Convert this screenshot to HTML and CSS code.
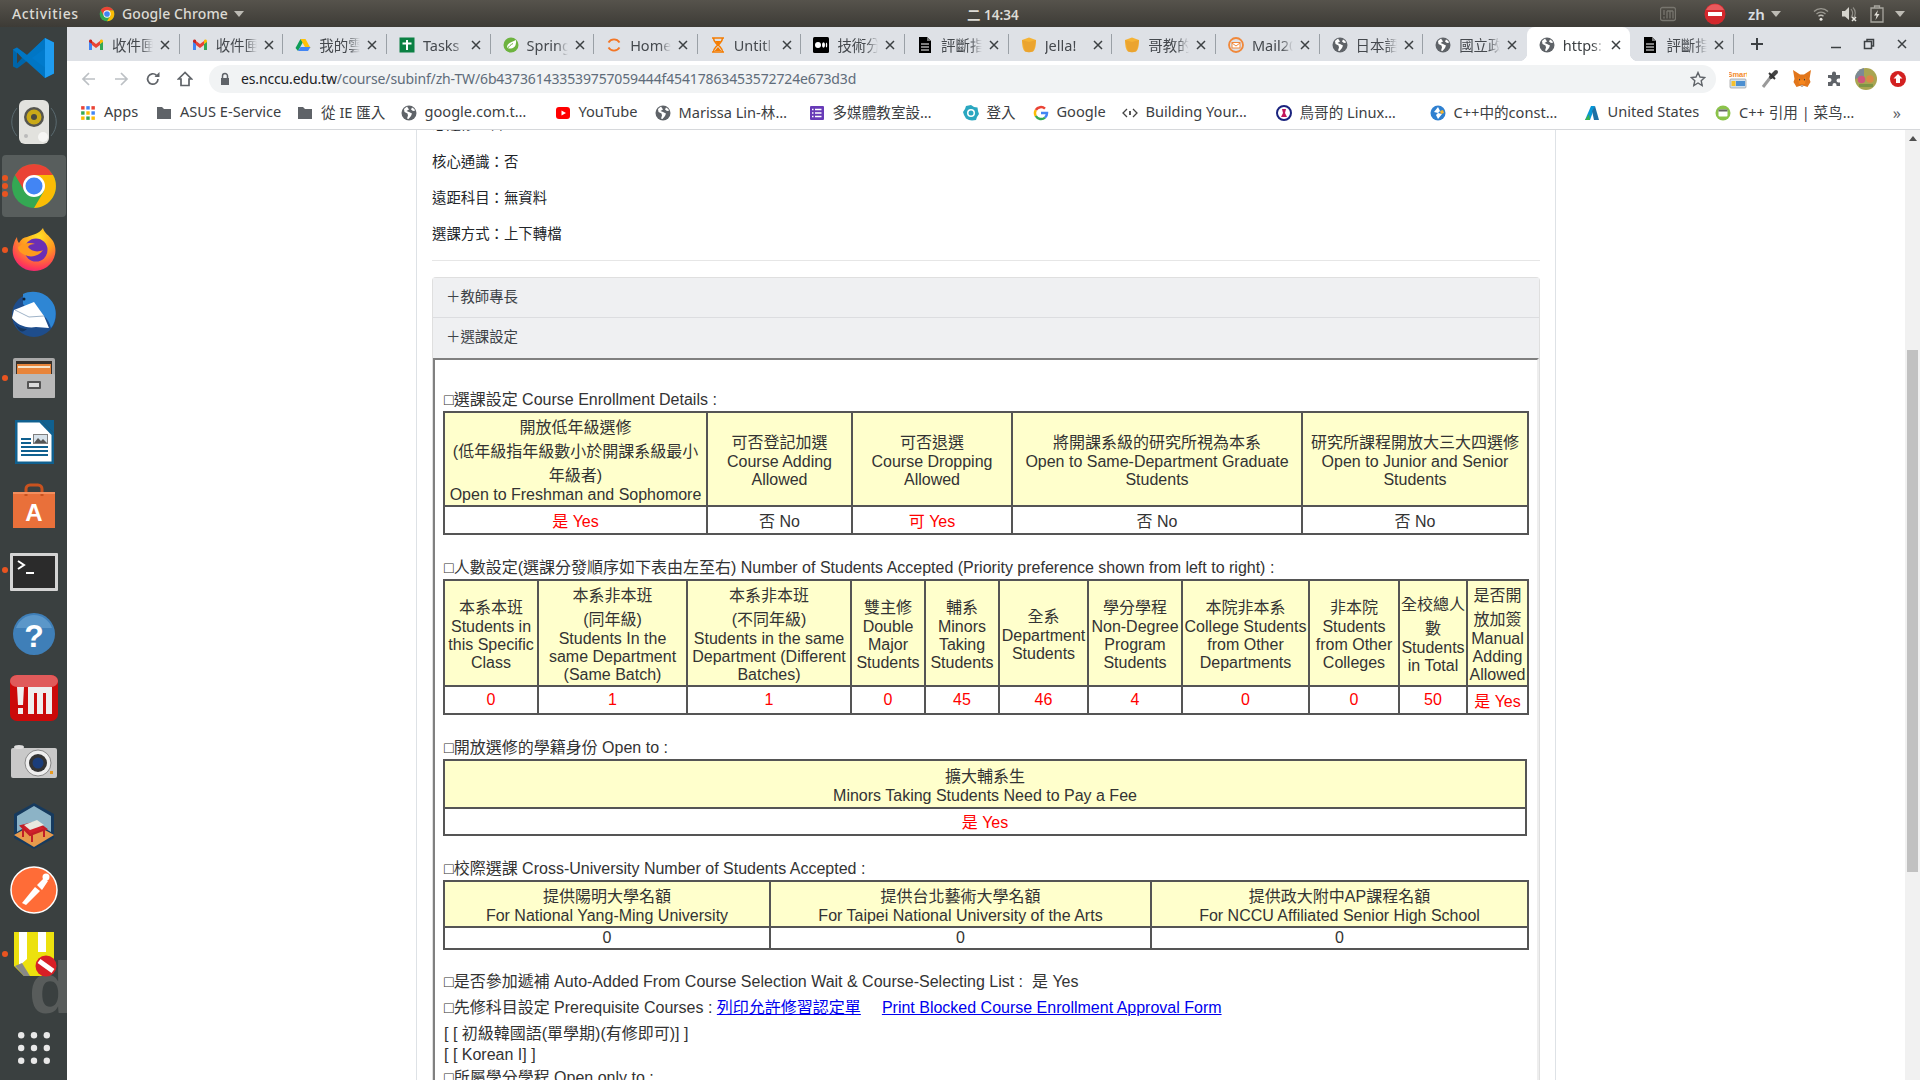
FILE: index.html
```html
<!DOCTYPE html>
<html lang="zh-TW">
<head>
<meta charset="utf-8">
<title>課程資訊</title>
<link rel="stylesheet" href="styles.css">
</head>
<body>
<svg class="defs" aria-hidden="true">
  <symbol id="i-gmail" viewBox="0 0 16 16"><path fill="#4285f4" d="M1 4v9h3V7z"/><path fill="#34a853" d="M15 4v9h-3V7z"/><path fill="#ea4335" d="M4 4v4l4 3 4-3V4L8 7z"/><path fill="#c5221f" d="M1 4c0-1.5 1.7-2 3-1v4L1 5z"/><path fill="#fbbc04" d="M15 4c0-1.500-1.700-2-3-1v4l3-2z"/></symbol>
  <symbol id="i-drive" viewBox="0 0 16 16"><path fill="#0f9d58" d="M5.500 2 0.500 11l2.500 3 5-9z"/><path fill="#ffc107" d="M5.500 2h5l5 9h-5z"/><path fill="#4285f4" d="M3 14l2.500-4H15.500L13 14z"/></symbol>
  <symbol id="i-tasks" viewBox="0 0 16 16"><rect x="0.500" y="0.500" width="15" height="15" fill="#0b8043"/><path stroke="#fff" stroke-width="2" d="M8 3v10M3.500 6.500h9"/></symbol>
  <symbol id="i-spring" viewBox="0 0 16 16"><circle cx="8" cy="8" r="7.500" fill="#6db33f"/><path fill="#fff" d="M13 3c.5 4-1 8-5 8.500-2 .2-3.500-.3-4-1C4 7 7 5.500 13 3z"/><path stroke="#6db33f" fill="none" d="M4 12c2-3 4-4.500 6-5.500"/></symbol>
  <symbol id="i-home" viewBox="0 0 16 16"><path fill="none" stroke="#f37626" stroke-width="1.800" d="M2.500 5.500a6.500 6.500 0 0 1 11 0M2.500 10.500a6.500 6.500 0 0 0 11 0"/></symbol>
  <symbol id="i-hour" viewBox="0 0 16 16"><path fill="none" stroke="#f57c00" stroke-width="1.500" d="M2 1h12M2 15h12M3.500 1c0 4 3 5 4 7-1 2-4 3-4 7M12.500 1c0 4-3 5-4 7 1 2 4 3 4 7"/><path fill="#f57c00" d="M5 4h6L8 8zM4.500 14 8 10l3.500 4z"/></symbol>
  <symbol id="i-medium" viewBox="0 0 16 16"><rect width="16" height="16" rx="1.500"/><circle cx="5" cy="8" r="3" fill="#fff"/><ellipse cx="10.500" cy="8" rx="1.500" ry="2.800" fill="#fff"/><ellipse cx="13.500" cy="8" rx=".7" ry="2.500" fill="#fff"/></symbol>
  <symbol id="i-doc" viewBox="0 0 16 16"><path d="M2 0h8l4 4v12H2z"/><path stroke="#fff" d="M4 7h8M4 10h8M4 13h8"/><path fill="#777" d="M10 0v4h4z"/></symbol>
  <symbol id="i-jelly" viewBox="0 0 16 16"><path fill="#f5b335" d="M8 0.500 15 3c0 6-1 10-3 11.500-2.500 1-5.500 1-8 0C2 13 1 9 1 3z"/><path fill="#e2962a" d="M1 3l7 2 7-2-1 6-2 5.500c-2.500 1-5.500 1-8 0z" opacity=".5"/></symbol>
  <symbol id="i-mail" viewBox="0 0 16 16"><circle cx="8" cy="8" r="7" fill="none" stroke="#f0883a" stroke-width="1.800"/><rect x="4" y="5.500" width="8" height="5.500" fill="#fff" stroke="#f0883a"/><path fill="none" stroke="#f0883a" d="M4 6l4 3 4-3"/></symbol>
  <symbol id="i-globe" viewBox="0 0 16 16"><circle cx="8" cy="8" r="7.500" fill="#5f6368"/><path fill="#fff" d="M6 1.500 3 4l.5 3 3 1.500.5 2-1 3 1.500.5 2.500-3 1-2.500-3-1.500L5.500 6 8 4.500zM11 2.500l-1 2 2 1.500 2.300-.5A7 7 0 0 0 11 2.500z"/></symbol>
  <symbol id="i-folder" viewBox="0 0 16 16"><path fill="#5f6368" d="M1 2h5l2 2h7v10H1z"/></symbol>
  <symbol id="i-chrome" viewBox="0 0 48 48"><circle cx="24" cy="24" r="22" fill="#34a853"/><path fill="#fbbc05" d="M43 13A22 22 0 0 1 24 46L34 29 24 13z"/><path fill="#ea4335" d="M24 2A22 22 0 0 1 43 13H24L14.500 29 5 13A22 22 0 0 1 24 2z"/><circle cx="24" cy="24" r="11" fill="#fff"/><circle cx="24" cy="24" r="8.500" fill="#4285f4"/></symbol>
</svg>

<div class="screen">
  <header class="topbar">
    <div class="top-left">
      <span class="activities">Activities</span>
      <svg class="top-chrome"><use href="#i-chrome"/></svg>
      <span class="appname">Google Chrome</span>
      <i class="caret"></i>
    </div>
    <div class="clock">二 14:34</div>
    <div class="tray">
      <svg class="tray-m" viewBox="0 0 16 16"><rect x=".5" y="1.500" width="15" height="13" rx="2" fill="none" stroke="#77756e" stroke-width="1.300"/><path stroke="#77756e" stroke-width="1.300" d="M4 4v5M4 10.500v2M7 5v7.500M10 5v7.500M13 5v7.500M7 5h6"/></svg>
      <svg class="tray-stop" viewBox="0 0 22 22"><circle cx="11" cy="11" r="10.500" fill="#d3272c"/><path d="M2 7a10 10 0 0 1 18 0z" fill="#e85a5d"/><rect x="4" y="9" width="14" height="4" fill="#fff"/></svg>
      <span class="tray-zh">zh</span>
      <i class="caret tray-caret1"></i>
      <svg class="tray-wifi" viewBox="0 0 16 14"><path fill="none" stroke="#9a9890" stroke-width="1.300" d="M1 4.500a10 10 0 0 1 14 0M3.500 7a6.500 6.500 0 0 1 9 0"/><path fill="none" stroke="#bdbbb4" stroke-width="1.300" d="M5.500 9.300a3.500 3.500 0 0 1 5 0"/><circle cx="8" cy="12.300" r="1.500" fill="#e6e4de"/></svg>
      <svg class="tray-vol" viewBox="0 0 16 16"><path fill="#d6d4cd" d="M1 5h3l4-4v13L4 10.500H1z"/><path fill="none" stroke="#8f8d86" stroke-width="1.200" d="M10 3c2 2.500 2 6 0 8.500M12 1.500c3 3 3 8 0 11"/><path stroke="#e6e4de" stroke-width="1.500" d="M11 11l4 4M15 11l-4 4"/></svg>
      <svg class="tray-batt" viewBox="0 0 14 18"><path fill="none" stroke="#a8a69f" stroke-width="1.300" d="M1 3h12v14H1zM4.500 3V1h5v2"/><path fill="#dedcd5" d="M8 5 4 10.500h2.500L5.500 15l4-6H7z"/></svg>
      <i class="caret tray-caret2"></i>
    </div>
  </header>

  <nav class="dock">
    <a class="dock-item"><svg class="dock-ico" viewBox="0 0 48 48"><path fill="#0065a9" d="M44 8.500 35 4 17 21 7 13.500 3 15.500V32.500L7 34.500 17 27 35 44 44 39.500z"/><path fill="#007acc" d="M35 4 17 21 7 13.500 3 15.500 35 44z" opacity=".8"/><path fill="#1f9cf0" d="M35 4 44 8.500V39.500L35 44z"/><path fill="#007acc" d="M35 14.500 22 24 35 33.500z"/><path fill="#3a4040" d="M7 18.500 12 24 7 29.500z"/></svg></a>
    <a class="dock-item"><svg class="dock-ico" viewBox="0 0 48 48"><g fill="none" stroke="#5a6a70" stroke-width="1"><path d="M7 10C0 18 0 30 7 38M41 10c7 8 7 20 0 28"/></g><rect x="9" y="2" width="30" height="44" rx="6" fill="#e2e2de"/><circle cx="24" cy="19" r="10" fill="#55554f"/><circle cx="24" cy="19" r="7.500" fill="#c9a918"/><circle cx="24" cy="19" r="3" fill="#4a4a42"/><circle cx="33" cy="39" r="5" fill="#f6f6f4"/><circle cx="16" cy="38" r="2" fill="#bbb"/></svg></a>
    <a class="dock-item is-active"><i class="run r1"></i><i class="run r2"></i><i class="run r3"></i><svg class="dock-ico"><use href="#i-chrome"/></svg></a>
    <a class="dock-item"><i class="run r2"></i><svg class="dock-ico" viewBox="0 0 48 48"><defs><radialGradient id="ff" cx=".6" cy=".2" r=".9"><stop offset="0" stop-color="#ffe226"/><stop offset=".45" stop-color="#ff9a1f"/><stop offset=".8" stop-color="#ff3d55"/><stop offset="1" stop-color="#e31587"/></radialGradient></defs><path fill="url(#ff)" d="M33 2c1 5 6 7 10 13 5 9 2 20-6 26-9 6-21 5-28-2C3 33 1 25 4 17c.5-2 1.500-4 3-6 0 3 1 5 2 6 2-4 5-6 8-6 5-2 12-3 16-9z"/><circle cx="26" cy="24" r="11.500" fill="#6b2fb5"/><path fill="#ff9a1f" d="M8 21c5-4 12-5 17-3-4 0-6 1-7 3 3 4 9 6 15 3-4 6-12 8-18 5-4-2-7-4-7-8z"/></svg></a>
    <a class="dock-item"><svg class="dock-ico" viewBox="0 0 48 48"><circle cx="24" cy="25" r="22" fill="#1e4d8c"/><path fill="#2e86d4" d="M13 4c10-5 25-2 31 11 3 7 2 17-3 23-2-9-10-17-19-19-4-1-7-2-9-5z"/><path fill="#fff" d="M4 20 24 12l10 14 5 12-13-1c-10 2-20-3-24-9z"/><path fill="none" stroke="#9fb3c8" d="M5 20l14 7 15-1"/><circle cx="14" cy="9" r="1.500" fill="#123"/><path fill="#16365f" d="M5 34c4 4 8 5 12 5-3 3-6 3-8 1z"/></svg></a>
    <a class="dock-item"><i class="run r2"></i><svg class="dock-ico" viewBox="0 0 48 48"><rect x="3" y="4" width="42" height="40" rx="2" fill="#a9a9a9"/><rect x="6" y="7" width="36" height="13" fill="#37302a"/><rect x="7" y="10" width="34" height="10" fill="#e8853b"/><rect x="8" y="12" width="32" height="2" fill="#f7e3c9"/><rect x="3" y="20" width="42" height="24" rx="1" fill="#b9b9b9"/><rect x="17" y="27" width="14" height="8" rx="1" fill="#555"/><rect x="19" y="29" width="10" height="4" fill="#ddd"/></svg></a>
    <a class="dock-item"><svg class="dock-ico" viewBox="0 0 48 48"><path fill="#10608f" d="M5 2h26l13 13v31H5z"/><path fill="#fff" d="M7.500 4.500h22L41.500 17v26.500h-34z"/><path fill="#10608f" d="M31 2h13v13z"/><path fill="#10608f" d="M11 20h10v2H11zM11 24h10v2H11zM11 28h27v2H11zM11 32h27v2H11zM11 36h27v2H11z"/><rect x="23" y="16" width="15" height="10" fill="#7f7f7f"/><path fill="#d7e2ea" d="M24 17h13v8H24z"/><path fill="#555" d="M24 25l4-5 3 3 2-2 4 4z"/></svg></a>
    <a class="dock-item"><svg class="dock-ico" viewBox="0 0 48 48"><rect x="3" y="10" width="42" height="36" fill="#e9703a"/><path fill="none" stroke="#c8521f" stroke-width="3" d="M16 14V7a4 4 0 0 1 4-4h8a4 4 0 0 1 4 4v7"/><rect x="3" y="10" width="42" height="2" fill="#f28e5e"/><text class="bag-a" x="24" y="39" text-anchor="middle">A</text></svg></a>
    <a class="dock-item dock-term"><i class="run r2"></i><svg class="dock-ico" viewBox="0 0 48 48"><rect x="0" y="5" width="48" height="38" rx="1" fill="#d4d4d4"/><rect x="3" y="8" width="42" height="32" fill="#2b2b2b"/><path fill="none" stroke="#fff" stroke-width="2" d="M8 13l6 4-6 4"/><path stroke="#fff" stroke-width="2" d="M16 25h8"/></svg></a>
    <a class="dock-item"><svg class="dock-ico" viewBox="0 0 48 48"><circle cx="24" cy="24" r="21" fill="#3f7fb8"/><path d="M6 18a19 19 0 0 1 36 0z" fill="#5b97c9"/><text class="help-q" x="24" y="37" text-anchor="middle">?</text></svg></a>
    <a class="dock-item"><svg class="dock-ico" viewBox="0 0 48 48"><rect x="0" y="1" width="48" height="46" rx="7" fill="#cb0a0a"/><rect x="0" y="1" width="48" height="12" rx="7" fill="#e05a5a"/><path fill="#eee" d="M7 13h7l-1 18H8zM8 34h5v6H8zM18 13h24v27h-6V19h-3v21h-6V19h-3v21h-6z"/></svg></a>
    <a class="dock-item"><svg class="dock-ico" viewBox="0 0 48 48"><rect x="1" y="10" width="46" height="30" rx="2" fill="#c9c9c9"/><ellipse cx="9" cy="9" rx="5" ry="2" fill="#ddd"/><circle cx="28" cy="25" r="13" fill="#eee" stroke="#888"/><circle cx="28" cy="25" r="9" fill="#333"/><circle cx="28" cy="25" r="5.500" fill="#1b3d7a"/><rect x="40" y="33" width="3" height="3" fill="#e99b20"/></svg></a>
    <a class="dock-item"><svg class="dock-ico" viewBox="0 0 48 48"><path fill="#163a5e" d="M24 1 44 12V36L24 47 4 36V12z"/><path fill="#8cb3c6" d="M7 14 24 4 41 14V30L24 20 7 30z"/><path fill="#e79a4c" d="M4 33 24 22 44 33 24 45z"/><path fill="#d0202b" d="M11 24 27 20 36 27 20 33zM13 27v8M22 32v8M34 28v7" stroke="#c01d27" stroke-width="2"/><path fill="#e8e8e0" d="M14 23l13-5 7 5-14 5z"/></svg></a>
    <a class="dock-item"><svg class="dock-ico" viewBox="0 0 48 48"><circle cx="24" cy="24" r="23" fill="#ff6c37" stroke="#fff" stroke-width="1.500"/><path fill="#fff" d="M12 37 25 21l5 4-14 14zM27 19l7-7 4 3-6 9z"/><circle cx="36" cy="11" r="3.500" fill="#fff"/></svg></a>
    <a class="dock-item"><i class="run r2"></i><svg class="dock-ico" viewBox="0 0 48 48"><path fill="#ece10e" d="M4 2h40v30l-10 14H14L4 36z"/><path fill="#fff" d="M9 2h8v27l-8 7zM28 2h8v20h-8z"/><path fill="#888" d="M5 36l9 10h6l-8-13z"/><circle cx="36" cy="36" r="10.500" fill="#d81f26"/><path stroke="#fff" stroke-width="5" d="M29 31l14 10"/></svg></a>
    <a class="dock-item dock-apps"><svg class="apps-dots" viewBox="0 0 30 30"><g fill="#e8e8e8"><circle cx="3" cy="3" r="3"/><circle cx="15" cy="3" r="3"/><circle cx="27" cy="3" r="3"/><circle cx="3" cy="15" r="3"/><circle cx="15" cy="15" r="3"/><circle cx="27" cy="15" r="3"/><circle cx="3" cy="27" r="3"/><circle cx="15" cy="27" r="3"/><circle cx="27" cy="27" r="3"/></g></svg></a>
    <span class="dock-wall">d</span>
  </nav>

  <div class="browser">
    <div class="tabstrip">
      <div class="tab"><svg class="fav"><use href="#i-gmail"/></svg><span class="title">收件匣</span><svg class="x" viewBox="0 0 10 10"><path d="M1 1l8 8M9 1l-8 8"/></svg></div>
      <div class="tab"><svg class="fav"><use href="#i-gmail"/></svg><span class="title">收件匣</span><svg class="x" viewBox="0 0 10 10"><path d="M1 1l8 8M9 1l-8 8"/></svg></div>
      <div class="tab"><svg class="fav"><use href="#i-drive"/></svg><span class="title">我的雲</span><svg class="x" viewBox="0 0 10 10"><path d="M1 1l8 8M9 1l-8 8"/></svg></div>
      <div class="tab"><svg class="fav"><use href="#i-tasks"/></svg><span class="title">Tasks</span><svg class="x" viewBox="0 0 10 10"><path d="M1 1l8 8M9 1l-8 8"/></svg></div>
      <div class="tab"><svg class="fav"><use href="#i-spring"/></svg><span class="title">Spring</span><svg class="x" viewBox="0 0 10 10"><path d="M1 1l8 8M9 1l-8 8"/></svg></div>
      <div class="tab"><svg class="fav"><use href="#i-home"/></svg><span class="title">Home</span><svg class="x" viewBox="0 0 10 10"><path d="M1 1l8 8M9 1l-8 8"/></svg></div>
      <div class="tab"><svg class="fav"><use href="#i-hour"/></svg><span class="title">Untitl</span><svg class="x" viewBox="0 0 10 10"><path d="M1 1l8 8M9 1l-8 8"/></svg></div>
      <div class="tab"><svg class="fav"><use href="#i-medium"/></svg><span class="title">技術分</span><svg class="x" viewBox="0 0 10 10"><path d="M1 1l8 8M9 1l-8 8"/></svg></div>
      <div class="tab"><svg class="fav"><use href="#i-doc"/></svg><span class="title">評斷指</span><svg class="x" viewBox="0 0 10 10"><path d="M1 1l8 8M9 1l-8 8"/></svg></div>
      <div class="tab"><svg class="fav"><use href="#i-jelly"/></svg><span class="title">Jella!</span><svg class="x" viewBox="0 0 10 10"><path d="M1 1l8 8M9 1l-8 8"/></svg></div>
      <div class="tab"><svg class="fav"><use href="#i-jelly"/></svg><span class="title">哥教的</span><svg class="x" viewBox="0 0 10 10"><path d="M1 1l8 8M9 1l-8 8"/></svg></div>
      <div class="tab"><svg class="fav"><use href="#i-mail"/></svg><span class="title">Mail20</span><svg class="x" viewBox="0 0 10 10"><path d="M1 1l8 8M9 1l-8 8"/></svg></div>
      <div class="tab"><svg class="fav"><use href="#i-globe"/></svg><span class="title">日本語</span><svg class="x" viewBox="0 0 10 10"><path d="M1 1l8 8M9 1l-8 8"/></svg></div>
      <div class="tab tab-before"><svg class="fav"><use href="#i-globe"/></svg><span class="title">國立政</span><svg class="x" viewBox="0 0 10 10"><path d="M1 1l8 8M9 1l-8 8"/></svg></div>
      <div class="tab tab-active"><svg class="fav"><use href="#i-globe"/></svg><span class="title">https:</span><svg class="x" viewBox="0 0 10 10"><path d="M1 1l8 8M9 1l-8 8"/></svg></div>
      <div class="tab"><svg class="fav"><use href="#i-doc"/></svg><span class="title">評斷指</span><svg class="x" viewBox="0 0 10 10"><path d="M1 1l8 8M9 1l-8 8"/></svg></div>
      <svg class="newtab" viewBox="0 0 14 14"><path d="M7 1v12M1 7h12"/></svg>
      <div class="winctl">
        <svg class="win-min" viewBox="0 0 12 12"><path d="M1 9.500h10"/></svg>
        <svg class="win-max" viewBox="0 0 12 12"><path d="M1.500 3.500h7v7h-7zM4 3.500V1.500h6.500v6.500H8.500"/></svg>
        <svg class="win-close" viewBox="0 0 12 12"><path d="M2 2l8 8M10 2l-8 8"/></svg>
      </div>
    </div>

    <div class="toolbar">
      <svg class="nav nav-off" viewBox="0 0 16 16"><path d="M14 8H2.500M8 2 2 8l6 6"/></svg>
      <svg class="nav nav-off" viewBox="0 0 16 16"><path d="M2 8h11.500M8 2l6 6-6 6"/></svg>
      <svg class="nav" viewBox="0 0 16 16"><path d="M13 8a5.200 5.200 0 1 1-1.500-3.700"/><path class="solid" d="M9.500 6h5V1z"/></svg>
      <svg class="nav" viewBox="0 0 16 16"><path d="M8 1.500 1.500 8H4v6.500h8V8h2.500z"/></svg>
      <div class="omnibox">
        <svg class="lock" viewBox="0 0 16 16"><path fill="#5f6368" d="M4 7h8v7H4z"/><path fill="none" stroke="#5f6368" stroke-width="1.500" d="M5.500 7V5a2.500 2.500 0 0 1 5 0v2"/></svg>
        <span class="url"><b>es.nccu.edu.tw</b>/course/subinf/zh-TW/6b437361433539757059444f45417863453572724e673d3d</span>
        <svg class="star" viewBox="0 0 16 16"><path d="M8 1.500 10 6l4.700.5-3.500 3.200 1 4.800L8 12l-4.200 2.500 1-4.800L1.300 6.500 6 6z"/></svg>
      </div>
      <div class="exts">
        <span class="ext"><svg viewBox="0 0 18 20" class="ext-ico"><rect x="1" y="10" width="16" height="9" rx="1" fill="#cfe0ee" stroke="#999" stroke-width=".7"/><rect x="2.500" y="12" width="4" height="5" fill="#f5c02c"/><rect x="7" y="12" width="9" height="5" fill="#4c8fd1"/><text class="smart" x="9" y="7.500" text-anchor="middle">Smart</text></svg></span>
        <span class="ext"><svg viewBox="0 0 18 20" class="ext-ico"><path stroke="#9a9a9a" stroke-width="3" d="M2 18 9 9"/><path stroke="#444" stroke-width="4" stroke-linecap="round" d="M10 8l5-5"/><path stroke="#333" stroke-width="2" d="M8 4l6 6"/></svg></span>
        <span class="ext"><svg viewBox="0 0 18 18" class="ext-ico"><path fill="#e2761b" d="M0 0l7 4.500h4L18 0l-1.500 9 1 3-3 5-3-1H6.500l-3 1-3-5 1-3z"/><path fill="#f6851b" d="M5 7l4 3 4-3-1 7H6z"/><path fill="#233447" d="M6 8.500 7.500 10 6 10.500zM12 8.500 10.500 10l1.500.5z"/><path fill="#c0ad9e" d="M7.500 15h3l-.5 2H8z"/></svg></span>
        <span class="ext"><svg viewBox="0 0 16 16" class="ext-ico ext-puzzle"><path fill="#5f6368" d="M6 2.500a2 2 0 0 1 4 0V4h4v3.500h-1.500a2 2 0 0 0 0 4H14V15H10.500v-1a2 2 0 0 0-4 0v1H2v-4H3.500a2 2 0 0 0 0-4H2V4h4z"/></svg></span>
        <span class="ext"><svg viewBox="0 0 22 22" class="ext-avatar"><circle cx="11" cy="11" r="11" fill="#a9a551"/><path fill="#7c8a96" d="M0 11a11 11 0 0 1 9-11v8z"/><circle cx="6.500" cy="11.500" r="3.800" fill="#d0567c"/><circle cx="15" cy="11" r="3.800" fill="#d98a47"/><rect x="4" y="16" width="14" height="3" fill="#7d9445"/></svg></span>
        <span class="ext"><svg viewBox="0 0 16 16" class="ext-ico ext-up"><circle cx="8" cy="8" r="8" fill="#d32121"/><path fill="#fff" d="M8 3l4.500 4.500H10V12H6V7.500H3.500z"/></svg></span>
      </div>
    </div>

    <div class="bookmarks">
      <div class="bm w76"><svg class="bm-ico" viewBox="0 0 14 14"><rect x="1" y="1" width="3" height="3" fill="#ea4335"/><rect x="5.500" y="1" width="3" height="3" fill="#4285f4"/><rect x="10" y="1" width="3" height="3" fill="#ea4335"/><rect x="1" y="5.500" width="3" height="3" fill="#34a853"/><rect x="5.500" y="5.500" width="3" height="3" fill="#fbbc04"/><rect x="10" y="5.500" width="3" height="3" fill="#4285f4"/><rect x="1" y="10" width="3" height="3" fill="#fbbc04"/><rect x="5.500" y="10" width="3" height="3" fill="#34a853"/><rect x="10" y="10" width="3" height="3" fill="#fbbc04"/></svg><span class="bm-t">Apps</span></div>
      <div class="bm w141"><svg class="bm-ico"><use href="#i-folder"/></svg><span class="bm-t">ASUS E-Service</span></div>
      <div class="bm w103"><svg class="bm-ico"><use href="#i-folder"/></svg><span class="bm-t">從 IE 匯入</span></div>
      <div class="bm w154"><svg class="bm-ico"><use href="#i-globe"/></svg><span class="bm-t">google.com.t…</span></div>
      <div class="bm w100"><svg class="bm-ico" viewBox="0 0 16 16"><rect x="1" y="2" width="14" height="12" rx="3" fill="#f00"/><path fill="#fff" d="M6.500 5.500 11 8l-4.500 2.500z"/></svg><span class="bm-t">YouTube</span></div>
      <div class="bm w154"><svg class="bm-ico"><use href="#i-globe"/></svg><span class="bm-t">Marissa Lin-林…</span></div>
      <div class="bm w154"><svg class="bm-ico" viewBox="0 0 16 16"><rect x="1" y="1" width="14" height="14" rx="1" fill="#673ab7"/><path stroke="#fff" stroke-width="1.500" d="M6 4.500h6.500M6 8h6.500M6 11.500h6.500M3 4.500h1.500M3 8h1.500M3 11.500h1.500"/></svg><span class="bm-t">多媒體教室設…</span></div>
      <div class="bm w70"><svg class="bm-ico" viewBox="0 0 16 16"><path fill="#2aa7c0" d="M8 0l3 2 3.500.5L15 6l1 3-2 3-1 3-4 .5-3-.5-3-1.500L1 10 0 7l2-3 1-3z"/><circle cx="8" cy="8" r="4" fill="#fff"/><circle cx="8" cy="8" r="2.500" fill="#2aa7c0"/></svg><span class="bm-t">登入</span></div>
      <div class="bm w89"><svg class="bm-ico" viewBox="0 0 16 16"><path fill="none" stroke="#ea4335" stroke-width="2.500" d="M2.800 5A6 6 0 0 1 12 3.700"/><path fill="none" stroke="#fbbc04" stroke-width="2.500" d="M2.800 5a6 6 0 0 0 0 6"/><path fill="none" stroke="#34a853" stroke-width="2.500" d="M2.800 11A6 6 0 0 0 12 12.600"/><path fill="none" stroke="#4285f4" stroke-width="2.500" d="M12 12.600A6 6 0 0 0 14 8H8"/></svg><span class="bm-t">Google</span></div>
      <div class="bm w154"><svg class="bm-ico" viewBox="0 0 16 16"><path fill="none" stroke="#444" stroke-width="1.300" d="M5 4 1 8l4 4M11 4l4 4-4 4"/><path stroke="#444" stroke-width="1.800" d="M8 6v4"/></svg><span class="bm-t">Building Your…</span></div>
      <div class="bm w154"><svg class="bm-ico" viewBox="0 0 16 16"><circle cx="8" cy="8" r="7" fill="#fff" stroke="#1a237e" stroke-width="2"/><path fill="#c2185b" d="M6 4h4l-1 4 2 4H5l2-4z"/></svg><span class="bm-t">鳥哥的 Linux…</span></div>
      <div class="bm w154"><svg class="bm-ico" viewBox="0 0 16 16"><circle cx="8" cy="8" r="7.500" fill="#2f80d0"/><path fill="#fff" d="M8 2l2 4-2 2-4-1zM8 14l-2-4 2-2 4 1z"/><path fill="#f7b731" d="M10 6l3-1 1 3-3 1z"/></svg><span class="bm-t">C++中的const…</span></div>
      <div class="bm w131"><svg class="bm-ico" viewBox="0 0 16 16"><path fill="#0696d7" d="M7 1h4L6 15H1z"/><path fill="#37b24d" d="M1 15l4-6 1 6z"/><path fill="#1d6fa5" d="M11 1l4 14h-5L8 6z"/></svg><span class="bm-t">United States</span></div>
      <div class="bm w150"><svg class="bm-ico" viewBox="0 0 16 16"><circle cx="8" cy="8" r="7.500" fill="#8bc34a"/><rect x="3.500" y="4.500" width="9" height="7" rx="1" fill="#fff"/><rect x="3.500" y="4.500" width="9" height="2" fill="#666"/></svg><span class="bm-t">C++ 引用 | 菜鸟…</span></div>
      <span class="bm-more">»</span>
    </div>

    <div class="viewport">
      <div class="page">
        <main class="column">
          <p class="info info-cut">必選修：否</p>
          <p class="info">核心通識：否</p>
          <p class="info">遠距科目：無資料</p>
          <p class="info">選課方式：上下轉檔</p>
          <hr class="rule">
          <section class="panel">
            <h3 class="panel-head">＋教師專長</h3>
            <h3 class="panel-head panel-head-open">＋選課設定</h3>
            <div class="panel-body">
              <div class="sec-title sec-first">□選課設定 Course Enrollment Details :</div>
              <table class="grid">
                <colgroup><col class="c263"><col class="c145"><col class="c160"><col class="c290"><col class="c226"></colgroup>
                <tr class="h94">
                  <th>開放低年級選修<br>(低年級指年級數小於開課系級最小年級者)<br>Open to Freshman and Sophomore</th>
                  <th>可否登記加選<br>Course Adding Allowed</th>
                  <th>可否退選<br>Course Dropping Allowed</th>
                  <th>將開課系級的研究所視為本系<br>Open to Same-Department Graduate Students</th>
                  <th>研究所課程開放大三大四選修<br>Open to Junior and Senior Students</th>
                </tr>
                <tr class="d28"><td class="red">是 Yes</td><td>否 No</td><td class="red">可 Yes</td><td>否 No</td><td>否 No</td></tr>
              </table>

              <div class="sec-title">□人數設定(選課分發順序如下表由左至右) Number of Students Accepted (Priority preference shown from left to right) :</div>
              <table class="grid">
                <colgroup><col class="c94"><col class="c149"><col class="c164"><col class="c74"><col class="c74"><col class="c89"><col class="c94"><col class="c127"><col class="c90"><col class="c68"><col class="c61"></colgroup>
                <tr class="h106">
                  <th>本系本班<br>Students in this Specific Class</th>
                  <th>本系非本班<br>(同年級)<br>Students In the same Department (Same Batch)</th>
                  <th>本系非本班<br>(不同年級)<br>Students in the same Department (Different Batches)</th>
                  <th>雙主修<br>Double Major Students</th>
                  <th>輔系<br>Minors Taking Students</th>
                  <th>全系<br>Department Students</th>
                  <th>學分學程<br>Non-Degree Program Students</th>
                  <th>本院非本系<br>College Students from Other Departments</th>
                  <th>非本院<br>Students from Other Colleges</th>
                  <th>全校總人數<br>Students in Total</th>
                  <th>是否開放加簽<br>Manual Adding Allowed</th>
                </tr>
                <tr class="red d28"><td>0</td><td>1</td><td>1</td><td>0</td><td>45</td><td>46</td><td>4</td><td>0</td><td>0</td><td>50</td><td>是 Yes</td></tr>
              </table>

              <div class="sec-title">□開放選修的學籍身份 Open to :</div>
              <table class="grid">
                <tr class="h48"><th>擴大輔系生<br>Minors Taking Students Need to Pay a Fee</th></tr>
                <tr class="d27"><td class="red">是 Yes</td></tr>
              </table>

              <div class="sec-title">□校際選課 Cross-University Number of Students Accepted :</div>
              <table class="grid">
                <colgroup><col class="c326"><col class="c381"><col class="c377"></colgroup>
                <tr class="h46">
                  <th>提供陽明大學名額<br>For National Yang-Ming University</th>
                  <th>提供台北藝術大學名額<br>For Taipei National University of the Arts</th>
                  <th>提供政大附中AP課程名額<br>For NCCU Affiliated Senior High School</th>
                </tr>
                <tr class="d22"><td>0</td><td>0</td><td>0</td></tr>
              </table>

              <div class="note note-first">□是否參加遞補 Auto-Added From Course Selection Wait &amp; Course-Selecting List :&nbsp; 是 Yes</div>
              <div class="note">□先修科目設定 Prerequisite Courses : <a class="lnk" href="#">列印允許修習認定單</a><a class="lnk lnk-2" href="#">Print Blocked Course Enrollment Approval Form</a></div>
              <div class="note">[ [ 初級韓國語(單學期)(有修即可)] ]</div>
              <div class="note note-tight">[ [ Korean I] ]</div>
              <div class="note note-close">□所屬學分學程 Open only to :</div>
            </div>
          </section>
        </main>
      </div>
      <div class="scrollbar">
        <i class="sb-up"></i>
        <div class="sb-thumb"></div>
      </div>
    </div>
  </div>
</div>
</body>
</html>
```

FILE: styles.css
```css
* { box-sizing: border-box; }
html, body { margin: 0; height: 100%; overflow: hidden; }
body { font-family: "Noto Sans", "Noto Sans CJK TC", sans-serif; background: #fff; }
.defs { position: absolute; width: 0; height: 0; }

.screen {
  display: grid;
  grid-template-columns: 67px 1fr;
  grid-template-rows: 27px 1fr;
  width: 1920px;
  height: 1080px;
  overflow: hidden;
}

/* GNOME top bar */
.topbar {
  grid-column: 1 / 3;
  display: grid;
  grid-template-columns: 967px auto 1fr;
  align-items: center;
  background: linear-gradient(#56534c, #3d3b36);
  color: #dcdad4;
  font-size: 14px;
}
.top-left { display: flex; align-items: center; padding-left: 12px; }
.activities { width: 87px; font-weight: 500; letter-spacing: .65px; }
.top-chrome { width: 16px; height: 16px; margin-right: 7px; }
.appname { width: 112px; font-weight: 500; letter-spacing: .1px; }
.caret { display: block; width: 0; height: 0; border: 5px solid transparent; border-top: 6px solid #bdbbb4; border-bottom: 0; }
.clock { font-weight: 600; font-size: 13.5px; color: #dedcd6; }
.tray { display: flex; align-items: center; justify-content: flex-end; padding-right: 15px; }
.tray-m { width: 16px; height: 16px; }
.tray-stop { width: 22px; height: 22px; margin-left: 28px; }
.tray-zh { margin-left: 22px; width: 20px; font-weight: 600; font-size: 15px; color: #d8dde2; }
.tray-caret1 { margin-left: 3px; }
.tray-wifi { width: 16px; height: 14px; margin-left: 32px; }
.tray-vol { width: 16px; height: 16px; margin-left: 12px; }
.tray-batt { width: 14px; height: 18px; margin-left: 13px; }
.tray-caret2 { margin-left: 11px; }

/* Dock */
.dock {
  position: relative;
  display: flex;
  flex-direction: column;
  background: #3a4040;
  overflow: hidden;
}
.dock-item { position: relative; flex: none; height: 64px; display: flex; align-items: center; justify-content: center; z-index: 1; }
.dock-item:first-child { margin-top: -1px; }
.dock-ico { width: 48px; height: 48px; }
.dock-term .dock-ico { margin-top: 4px; }
.is-active::before { content: ""; position: absolute; left: 2px; right: 1px; top: 1px; bottom: 1px; background: #585e5d; border-radius: 4px; }
.is-active .dock-ico { position: relative; }
.run { position: absolute; left: 2px; top: 50%; margin-top: -3px; width: 6px; height: 6px; border-radius: 50%; background: #e95420; z-index: 1; }
.r1 { margin-top: -11px; }
.r3 { margin-top: 5px; }
.dock-apps { margin-top: auto; margin-bottom: 0; }
.apps-dots { width: 32px; height: 32px; }
.dock-wall { position: absolute; left: 29px; bottom: 56px; font: 700 72px/1 "Liberation Sans", sans-serif; color: #585c5b; z-index: 0; }
.bag-a { font: 700 24px "Liberation Sans", sans-serif; fill: #fff; }
.help-q { font: 700 32px "Liberation Sans", sans-serif; fill: #fff; }
.smart { font: 700 7.500px "Liberation Sans", sans-serif; fill: #f48b2a; }

/* Chrome window */
.browser { display: flex; flex-direction: column; min-width: 0; min-height: 0; }
.tabstrip { flex: none; height: 34px; display: flex; background: #dee1e6; padding-left: 9px; color: #45494e; font-size: 14.500px; }
.tab { position: relative; flex: none; width: 103.630px; display: flex; align-items: center; padding-left: 12px; padding-top: 1px; }
.tab::after { content: ""; position: absolute; right: 0; top: 7px; height: 20px; width: 1px; background: #9aa0a6; }
.tab-before::after { display: none; }
.tab-active { background: #fff; border-radius: 8px 8px 0 0; color: #3c4043; }
.tab-active::before, .tab-active::after { content: ""; display: block; position: absolute; top: auto; bottom: 0; width: 8px; height: 8px; background: radial-gradient(circle at 0 0, transparent 8px, #fff 8.500px); }
.tab-active::before { left: -8px; }
.tab-active::after { right: -8px; background: radial-gradient(circle at 100% 0, transparent 8px, #fff 8.500px); }
.fav { flex: none; width: 16px; height: 16px; margin-right: 8px; }
.title { flex: none; width: 41px; overflow: hidden; white-space: nowrap; -webkit-mask-image: linear-gradient(90deg, #000 72%, transparent); mask-image: linear-gradient(90deg, #000 72%, transparent); }
.x { flex: none; width: 10px; height: 10px; margin-left: 7px; fill: none; stroke: #3c4043; stroke-width: 1.500; }
.newtab { flex: none; width: 14px; height: 14px; margin: 10px 0 0 16px; fill: none; stroke: #3c4043; stroke-width: 2; }
.winctl { margin-left: auto; display: flex; align-items: center; padding-right: 12px; gap: 21px; }
.winctl svg { width: 12px; height: 12px; fill: none; stroke: #3c4043; stroke-width: 1.500; }

.toolbar { flex: none; height: 35px; display: flex; align-items: center; background: #fff; padding: 0 6px; }
.nav { flex: none; width: 16px; height: 16px; margin: 0 8px; fill: none; stroke: #5f6368; stroke-width: 1.700; }
.nav-off { stroke: #bcc0c4; }
.nav .solid { fill: #5f6368; stroke: none; }
.omnibox { flex: 1; min-width: 0; height: 28px; margin: 0 6px 0 8px; padding: 0 10px 0 8px; display: flex; align-items: center; background: #f1f3f4; border-radius: 14px; }
.lock { flex: none; width: 16px; height: 16px; margin-right: 8px; }
.url { flex: 1; font-size: 14px; letter-spacing: -.14px; color: #5f6c7a; white-space: nowrap; overflow: hidden; }
.url b { font-weight: 400; color: #202124; }
.star { flex: none; width: 16px; height: 16px; fill: none; stroke: #5f6368; stroke-width: 1.400; }
.exts { flex: none; display: flex; }
.ext { width: 32px; height: 28px; display: flex; align-items: center; justify-content: center; }
.ext-ico { width: 18px; height: 20px; }
.ext-puzzle { width: 16px; height: 16px; }
.ext-avatar { width: 22px; height: 22px; }
.ext-up { width: 16px; height: 16px; }

.bookmarks { flex: none; height: 34px; display: flex; align-items: center; background: #fff; border-bottom: 1px solid #d6d8db; padding-left: 13px; color: #3c4043; font-size: 14.600px; white-space: nowrap; }
.bm { flex: none; display: flex; align-items: center; }
.bm-ico { flex: none; width: 16px; height: 16px; margin-right: 8px; }
.bm-t { display: block; margin-top: -3px; }
.w70 { width: 70px; } .w76 { width: 76px; } .w89 { width: 89px; } .w100 { width: 100px; }
.w103 { width: 103.500px; } .w131 { width: 131.500px; } .w141 { width: 141px; } .w150 { width: 150px; } .w154 { width: 154px; }
.bm-more { margin-left: auto; padding-right: 19px; font-size: 16px; color: #5f6368; }

/* Page */
.viewport { flex: 1; min-height: 0; display: flex; background: #fff; }
.page { flex: 1; min-width: 0; overflow: hidden; display: flex; justify-content: center; }
.column {
  width: 1140px;
  height: 100%;
  padding: 0 15px;
  border-left: 1px solid #dee2e6;
  border-right: 1px solid #dee2e6;
  overflow: hidden;
  color: #212529;
  font-family: "Liberation Sans", "Noto Sans CJK TC", sans-serif;
  font-size: 14.4px;
}
.info { margin: 0 0 14.400px; line-height: 21.600px; }
.info-cut { margin-top: -16px; margin-bottom: 16.400px; }
.rule { margin: 14px 0 16px; border: 0; border-top: 1px solid #e6e6e6; }
.panel { border: 1px solid #dfdfdf; border-radius: 4px 4px 0 0; border-bottom: 0; }
.panel-head { margin: 0; height: 40px; padding: 0 0 3px 13px; display: flex; align-items: center; font-size: 14.4px; font-weight: 400; color: #3d4247; background: #eff0f2; border-bottom: 1px solid #dcdde0; }
.panel-head-open { border-bottom: 0; padding-bottom: 5px; }
.panel-body {
  padding: 0 10px 0 8px;
  border-style: solid;
  border-width: 2px;
  border-color: #808080 #eeeeee #eeeeee #808080;
  font-size: 16px;
  color: #333;
}
.sec-title { margin: 19px 0 1px; padding-left: 1px; line-height: normal; }
.sec-first { margin-top: 26px; }
.grid { width: 100%; table-layout: fixed; border-collapse: collapse; border: 2px solid #4d4d4d; text-align: center; }
.grid th, .grid td { padding: 0 1px; border: 2px solid #555; font-weight: 400; vertical-align: middle; }
.grid th { background: #ffffcc; }
.h94 th { height: 94px; }
.h106 th { height: 106px; }
.h48 th { height: 48px; }
.h46 th { height: 46px; }
.d28 td { height: 28px; }
.d27 td { height: 27px; }
.d22 td { height: 22px; }
.red, .red td { color: #f00; }
.c263 { width: 263px; } .c145 { width: 145px; } .c160 { width: 160px; } .c290 { width: 290px; } .c226 { width: 226px; }
.c94 { width: 94px; } .c149 { width: 149px; } .c164 { width: 164px; } .c74 { width: 74px; } .c89 { width: 89px; }
.c127 { width: 127px; } .c90 { width: 90px; } .c68 { width: 68px; } .c61 { width: 61px; }
.c326 { width: 326px; } .c381 { width: 381px; } .c377 { width: 377px; }
.note { margin-top: 3px; padding-left: 1px; line-height: 23px; }
.note-first { margin-top: 20px; }
.note-tight { margin-top: -2px; }
.note-close { margin-top: 0; }
.lnk { color: #0000ee; text-decoration: underline; }
.lnk-2 { margin-left: 21px; }

/* Scrollbar */
.scrollbar { flex: none; width: 15px; background: #f1f1f1; padding: 0 2px; }
.sb-up { display: block; width: 0; height: 0; margin: 6px auto 0; border: 4px solid transparent; border-top: 0; border-bottom: 5px solid #505050; }
.sb-thumb { height: 522px; margin-top: 209px; background: #c1c1c1; }
```
